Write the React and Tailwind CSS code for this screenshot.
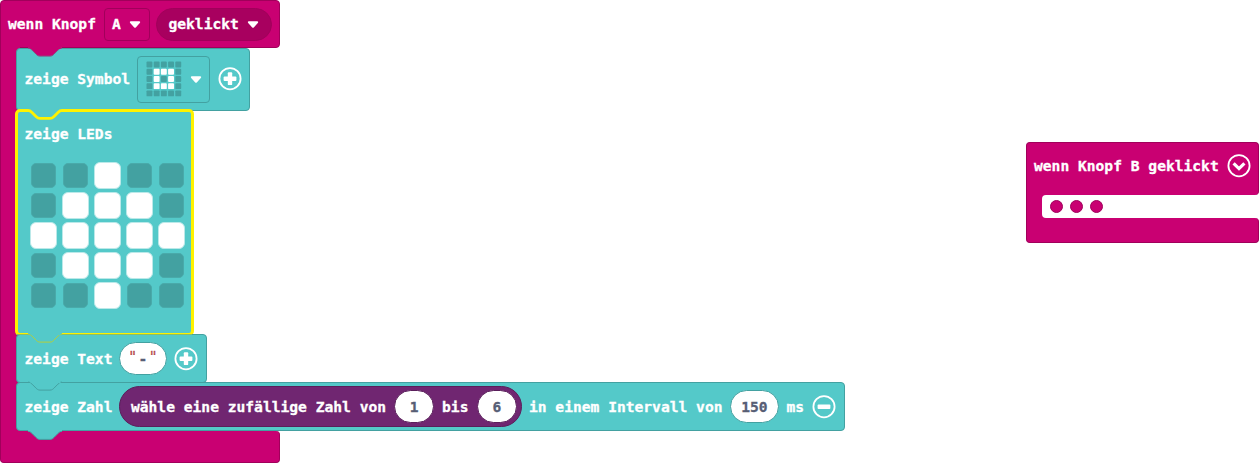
import React from "react";

const NOTCH = "c2,0 3,1 4,2 l4,4 c1,1 2,2 4,2 h10 c2,0 3,-1 4,-2 l4,-4 c1,-1 2,-2 4,-2";

function Notch({ fill, stroke }) {
  return (
    <svg className="absolute left-[10px] -top-[2px] h-[11px] w-[38px]" viewBox="0 -1 38 11">
      <path d={"M1,-0.5 V0.5 " + NOTCH + " V-0.5 Z"} fill={fill} transform="translate(0,-0.5)" />
      <path d={"M1,0.1 " + NOTCH} fill="none" stroke={stroke} />
      <path d="M3.5,0.5 H33.5" stroke={fill} />
    </svg>
  );
}

function Arrow({ className }) {
  return (
    <svg className={"h-[7px] w-[12px] shrink-0 " + className} viewBox="0 0 12 7">
      <path d="M1.9,0.3 H10.1 Q11.8,0.6 10.8,2 L7,6.2 Q6,7.2 5,6.2 L1.2,2 Q0.2,0.6 1.9,0.3 Z" fill="#fff" />
    </svg>
  );
}

function RoundIcon({ kind, className }) {
  return (
    <svg className={"h-6 w-6 shrink-0 " + className} viewBox="0 0 24 24" fill="none" stroke="#fff">
      <circle cx="12" cy="11.7" r="10.6" strokeWidth="1.8" />
      {kind === "plus" && (
        <g fill="#fff" stroke="none">
          <rect x="5.6" y="9.5" width="12.8" height="4.4" rx="0.9" />
          <rect x="9.8" y="5.3" width="4.4" height="12.8" rx="0.9" />
        </g>
      )}
      {kind === "minus" && <rect x="5.6" y="9.5" width="12.8" height="4.4" rx="0.9" fill="#fff" stroke="none" />}
      {kind === "down" && <path d="M6.6,9.4 L12,14.6 L17.4,9.4" strokeWidth="3.2" />}
    </svg>
  );
}

function Label({ children, className = "" }) {
  return <span className={"shrink-0 whitespace-pre " + className}>{children}</span>;
}

function Value({ children, className }) {
  return (
    <span className={"flex h-[33px] shrink-0 items-center justify-center rounded-full border bg-white text-[#575e75] " + className}>
      {children}
    </span>
  );
}

const LEDS = ["..#..", ".###.", "#####", ".###.", "..#.."];
const SYMBOL = [".....", ".###.", ".#.#.", ".###.", "....."];
const TEAL = "#54c9c9";
const TEAL_LINE = "#43a1a1";
const BLOCK = "relative flex rounded-[4px] border border-[#43a1a1] bg-[#54c9c9] ";

function ButtonBlock() {
  return (
    <div className="flex h-[463px] w-[845px] flex-col">
      <div className="flex h-12 w-[280px] items-center rounded-[4px] rounded-bl-none border border-[#a1005b] bg-[#c90072] pl-[7px]">
        <Label>wenn Knopf</Label>
        <div className="ml-2 flex h-[33px] w-[46px] shrink-0 items-center rounded-[4px] border border-[#a1005b] pl-[7px]">
          <Label>A</Label>
          <Arrow className="ml-[8px]" />
        </div>
        <div className="ml-[6.5px] flex h-[33px] w-[116px] shrink-0 items-center rounded-full border border-[#a1005b] bg-[#a8005f] pl-[11px]">
          <Label>geklickt</Label>
          <Arrow className="ml-[8px]" />
        </div>
      </div>

      <div className="-mt-px flex h-96">
        <div className="-mb-1 w-5 shrink-0 border-l border-[#a1005b] bg-[#c90072]" />
        <div className="-ml-1 mt-px flex flex-col items-start">
          <div className={BLOCK + "h-[63px] w-[234px] items-center pl-[7.5px]"}>
            <Notch fill="#c90072" stroke="#8a4a80" />
            <Label>zeige Symbol</Label>
            <div className="ml-[7px] flex h-[47px] w-[73px] shrink-0 items-center rounded-[4px] border border-[#43a1a1] pl-[8px]">
              <svg className="h-9 w-9 shrink-0" viewBox="0 0 36 36">
                {SYMBOL.flatMap((row, y) =>
                  [...row].map((c, x) => (
                    <rect key={x + "-" + y} x={0.5 + x * 7.2} y={0.6 + y * 7.2} width="5.9" height="5.9" rx="0.9" fill={c === "#" ? "#fff" : "#43a1a1"} />
                  ))
                )}
              </svg>
              <Arrow className="ml-[7.5px]" />
            </div>
            <RoundIcon kind="plus" className="ml-[7.5px]" />
          </div>

          <div className="relative -ml-px -mt-[2px] flex h-[228px] w-[178.5px] flex-col rounded-[5px] border-[3px] border-[#fff200] bg-[#54c9c9] pl-[6.5px] pt-[10px]">
            <svg className="absolute left-[9px] -top-[3px] h-[13px] w-[38px]" viewBox="0 -1.5 38 13">
              <path d={"M1,-1.5 V0 " + NOTCH + " V-1.5 Z"} fill={TEAL} />
              <path d={"M1,-0.1 " + NOTCH} fill="none" stroke="#fff200" strokeWidth="2.8" />
            </svg>
            <Label className="leading-6">zeige LEDs</Label>
            <div className="ml-[5.5px] mt-[16px] grid grid-cols-[repeat(5,32px)] grid-rows-[repeat(5,30px)]">
              {LEDS.flatMap((row, y) =>
                [...row].map((c, x) => (
                  <span
                    key={x + "-" + y}
                    className={c === "#" ? "h-[27px] w-[27px] rounded-[6px] border border-[#bbe9e9] bg-white" : "ml-px mt-px h-[25px] w-[25px] rounded-[5px] border border-[#49aaaa] bg-[#43a1a1]"}
                  />
                ))
              )}
            </div>
          </div>

          <div className={BLOCK + "-mt-[2px] h-[49px] w-[191px] items-center pl-[7.5px]"}>
            <span className="absolute -left-px -top-px h-px w-[176px] bg-[#8cbf62]" />
            <Notch fill={TEAL} stroke="#b5cf3c" />
            <Label>zeige Text</Label>
            <Value className="ml-[6.5px] w-[48px] gap-[1.5px] border-[#43a1a1]">
              <span className="-mt-[5px] text-[#a31515]/75 font-normal">"</span>
              <span>-</span>
              <span className="-mt-[5px] text-[#a31515]/75 font-normal">"</span>
            </Value>
            <RoundIcon kind="plus" className="ml-[7px]" />
          </div>

          <div className={BLOCK + "z-10 -mt-px h-[49px] w-[829px] items-center pl-[7.5px]"}>
            <Notch fill={TEAL} stroke={TEAL_LINE} />
            <Label>zeige Zahl</Label>
            <div className="ml-[6.5px] flex h-[41px] w-[403px] shrink-0 items-center rounded-full border border-[#5a1f5b] bg-[#702671] pl-[11px]">
              <Label>wähle eine zufällige Zahl von</Label>
              <Value className="ml-[8px] w-[40px] border-[#5a1f5b]">1</Value>
              <Label className="ml-[8px]">bis</Label>
              <Value className="ml-[8.5px] w-[40px] border-[#5a1f5b]">6</Value>
            </div>
            <Label className="ml-[7px]">in einem Intervall von</Label>
            <Value className="ml-[7.5px] w-[49px] border-[#43a1a1]">150</Value>
            <Label className="ml-[7.5px]">ms</Label>
            <RoundIcon kind="minus" className="ml-[8px]" />
          </div>
        </div>
      </div>

      <div className="relative h-8 w-[280px] rounded-b-[4px] rounded-tr-[4px] border border-t-0 border-[#a1005b] bg-[#c90072]">
        <svg className="absolute -top-px left-[26px] z-20 h-[11px] w-[38px]" viewBox="0 -1 38 11">
          <path d={"M1,-1 V0.5 " + NOTCH + " V-1 Z"} fill={TEAL} />
          <path d={"M1,0.4 " + NOTCH} fill="none" stroke={TEAL_LINE} />
        </svg>
      </div>
    </div>
  );
}

function CollapsedBlock() {
  return (
    <div className="mt-[142px] flex h-[101px] w-[233.5px] flex-col">
      <div className="flex h-[53px] items-center rounded-[4px] rounded-bl-none border border-b-0 border-[#a1005b] bg-[#c90072] pb-[6px] pl-[7.5px]">
        <Label>wenn Knopf B geklickt</Label>
        <RoundIcon kind="down" className="ml-[8px]" />
      </div>
      <div className="flex h-[23px] border-l border-[#a1005b] bg-[#c90072] pl-[15.5px]">
        <div className="flex flex-1 items-center gap-[7px] rounded-l-[4px] bg-white pl-[7.5px]">
          {[0, 1, 2].map((i) => (
            <span key={i} className="h-[13px] w-[13px] rounded-full border border-[#a1005b] bg-[#c90072]" />
          ))}
        </div>
      </div>
      <div className="h-[25px] rounded-b-[4px] rounded-tr-[4px] border border-t-0 border-[#a1005b] bg-[#c90072]" />
    </div>
  );
}

export default function App() {
  return (
    <div className="flex h-[463px] w-[1259px] items-start justify-between overflow-hidden bg-white font-['DejaVu_Sans_Mono',monospace] text-[14.62px] font-bold leading-6 text-white [-webkit-text-stroke:0.3px_currentColor]">
      <ButtonBlock />
      <CollapsedBlock />
    </div>
  );
}
